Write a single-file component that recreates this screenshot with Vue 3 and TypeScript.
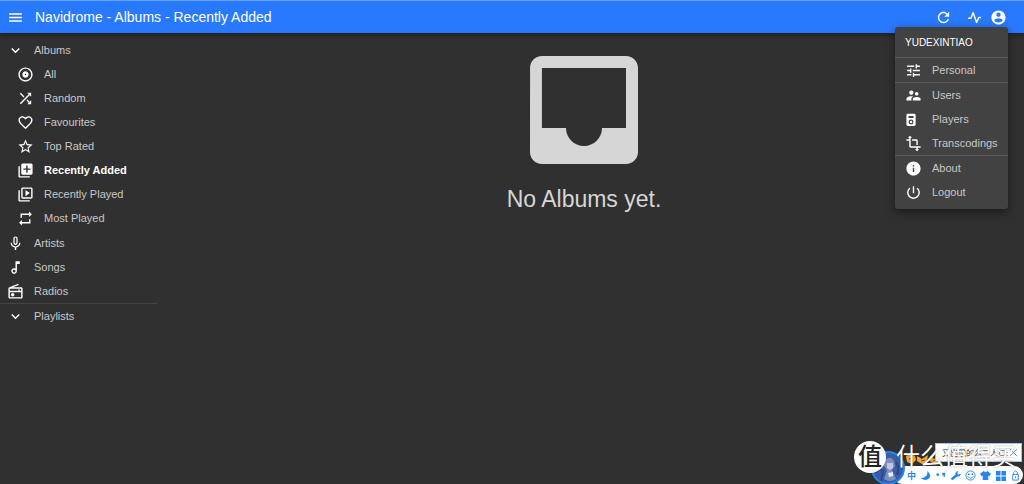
<script setup lang="ts">
import { ref } from 'vue'

interface Item {
  label: string
  icon: string
  active?: boolean
}

const paths: Record<string, string> = {
  menu: 'M3 18h18v-2H3v2zm0-5h18v-2H3v2zm0-7v2h18V6H3z',
  expand: 'M16.59 8.59L12 13.17 7.41 8.59 6 10l6 6 6-6z',
  album: 'M12 2C6.48 2 2 6.48 2 12s4.48 10 10 10 10-4.48 10-10S17.52 2 12 2zm0 18c-4.41 0-8-3.59-8-8s3.59-8 8-8 8 3.59 8 8-3.59 8-8 8zm0-12.5c-2.49 0-4.5 2.01-4.5 4.5s2.01 4.5 4.5 4.5 4.5-2.01 4.5-4.5-2.01-4.5-4.5-4.5zm0 5.5c-.55 0-1-.45-1-1s.45-1 1-1 1 .45 1 1-.45 1-1 1z',
  shuffle: 'M10.59 9.17L5.41 4 4 5.41l5.17 5.17 1.42-1.41zM14.5 4l2.04 2.04L4 18.59 5.41 20 17.96 7.46 20 9.5V4h-5.5zm.33 9.41l-1.41 1.41 3.13 3.13L14.5 20H20v-5.5l-2.04 2.04-3.13-3.13z',
  heart: 'M16.5 3c-1.74 0-3.41.81-4.5 2.09C10.91 3.81 9.24 3 7.5 3 4.42 3 2 5.42 2 8.5c0 3.78 3.4 6.86 8.55 11.54L12 21.35l1.45-1.32C18.6 15.36 22 12.28 22 8.5 22 5.42 19.58 3 16.5 3zm-4.4 15.55l-.1.1-.1-.1C7.14 14.24 4 11.39 4 8.5 4 6.5 5.5 5 7.5 5c1.54 0 3.04.99 3.57 2.36h1.87C13.46 5.99 14.96 5 16.5 5c2 0 3.5 1.5 3.5 3.5 0 2.89-3.14 5.74-7.9 10.05z',
  star: 'M22 9.24l-7.19-.62L12 2 9.19 8.63 2 9.24l5.46 4.73L5.82 21 12 17.27 18.18 21l-1.63-7.03L22 9.24zM12 15.4l-3.76 2.27 1-4.28-3.32-2.88 4.38-.38L12 6.1l1.71 4.04 4.38.38-3.32 2.88 1 4.28L12 15.4z',
  added: 'M4 6H2v14c0 1.1.9 2 2 2h14v-2H4V6zm16-4H8c-1.1 0-2 .9-2 2v12c0 1.1.9 2 2 2h12c1.1 0 2-.9 2-2V4c0-1.1-.9-2-2-2zm-1 9h-4v4h-2v-4H9V9h4V5h2v4h4v2z',
  played: 'M4 6H2v14c0 1.1.9 2 2 2h14v-2H4V6zm16-4H8c-1.1 0-2 .9-2 2v12c0 1.1.9 2 2 2h12c1.1 0 2-.9 2-2V4c0-1.1-.9-2-2-2zm0 14H8V4h12v12zM12 5.5v9l6-4.5z',
  repeat: 'M7 7h10v3l4-4-4-4v3H5v6h2V7zm10 10H7v-3l-4 4 4 4v-3h12v-6h-2v4z',
  mic: 'M12 14c1.66 0 2.99-1.34 2.99-3L15 5c0-1.66-1.34-3-3-3S9 3.34 9 5v6c0 1.66 1.34 3 3 3zm-1.2-9.1c0-.66.54-1.2 1.2-1.2.66 0 1.2.54 1.2 1.2l-.01 6.2c0 .66-.53 1.2-1.19 1.2-.66 0-1.2-.54-1.2-1.2V4.9zm6.5 6.1c0 3-2.54 5.1-5.3 5.1S6.7 14 6.7 11H5c0 3.41 2.72 6.23 6 6.72V21h2v-3.28c3.28-.48 6-3.3 6-6.72h-1.7z',
  note: 'M12 3v10.55c-.59-.34-1.27-.55-2-.55-2.21 0-4 1.79-4 4s1.79 4 4 4 4-1.79 4-4V7h4V3h-6zm-2 16c-1.1 0-2-.9-2-2s.9-2 2-2 2 .9 2 2-.9 2-2 2z',
  radio: 'M3.24 6.15C2.51 6.43 2 7.17 2 8v12c0 1.1.89 2 2 2h16c1.11 0 2-.9 2-2V8c0-1.11-.89-2-2-2H8.3l8.26-3.34L15.88 1 3.24 6.15zM20 8v3h-2V9h-2v2H4V8h16zm0 12H4v-7h16v7zM8 14a2.5 2.5 0 1 0 0 5 2.5 2.5 0 1 0 0-5z',
  refresh: 'M17.65 6.35C16.2 4.9 14.21 4 12 4c-4.42 0-7.99 3.58-7.99 8s3.57 8 7.99 8c3.73 0 6.84-2.55 7.73-6h-2.08c-.82 2.33-3.04 4-5.65 4-3.31 0-6-2.69-6-6s2.69-6 6-6c1.66 0 3.14.69 4.22 1.78L13 11h7V4l-2.35 2.35z',
  account: 'M12 2C6.48 2 2 6.48 2 12s4.48 10 10 10 10-4.48 10-10S17.52 2 12 2zm0 3c1.66 0 3 1.34 3 3s-1.34 3-3 3-3-1.34-3-3 1.34-3 3-3zm0 14.2c-2.5 0-4.71-1.28-6-3.22.03-1.99 4-3.08 6-3.08 1.99 0 5.97 1.09 6 3.08-1.29 1.94-3.5 3.22-6 3.22z',
  tune: 'M3 17v2h6v-2H3zM3 5v2h10V5H3zm10 16v-2h8v-2h-8v-2h-2v6h2zM7 9v2H3v2h4v2h2V9H7zm14 4v-2H11v2h10zm-6-4h2V7h4V5h-4V3h-2v6z',
  users: 'M16.5 12c1.38 0 2.49-1.12 2.49-2.5S17.88 7 16.5 7 14 8.12 14 9.5s1.12 2.5 2.5 2.5zM9 11c1.66 0 2.99-1.34 2.99-3S10.66 5 9 5 6 6.34 6 8s1.34 3 3 3zm7.5 3c-1.83 0-5.5.92-5.5 2.75V19h11v-2.25c0-1.83-3.67-2.75-5.5-2.75zM9 13c-2.33 0-7 1.17-7 3.5V19h7v-2.25c0-.85.33-2.34 2.37-3.47C10.5 13.1 9.66 13 9 13z',
  player: 'M4 4h9q2 0 2 2v13q0 2-2 2H4q-2 0-2-2V6q0-2 2-2zm1 3v3h7V7zm3.500 5a3.500 3.500 0 1 0 0 7 3.500 3.500 0 1 0 0-7zm0 1.700a1.800 1.800 0 1 1 0 3.600 1.800 1.800 0 1 1 0-3.600z',
  transform: 'M22 18v-2H8V4h2L7 1 4 4h2v2H2v2h4v8c0 1.1.9 2 2 2h8v2h-2l3 3 3-3h-2v-2h4zM10 8h6v6h2V8c0-1.1-.9-2-2-2h-6v2z',
  info: 'M12 2C6.48 2 2 6.48 2 12s4.48 10 10 10 10-4.48 10-10S17.52 2 12 2zm1 15h-2v-6h2v6zm0-8h-2V7h2v2z',
  power: 'M13 3h-2v10h2V3zm4.83 2.17l-1.42 1.42C17.99 7.86 19 9.81 19 12c0 3.87-3.13 7-7 7s-7-3.13-7-7c0-2.19 1.01-4.14 2.58-5.42L6.17 5.17C4.23 6.82 3 9.26 3 12c0 4.97 4.03 9 9 9s9-4.03 9-9c0-2.74-1.23-5.18-3.17-6.83z',
  inbox: 'M19 3H4.99c-1.11 0-1.98.89-1.98 2L3 19c0 1.1.88 2 1.99 2H19c1.1 0 2-.9 2-2V5c0-1.1-.9-2-2-2zm0 12h-4c0 1.66-1.35 3-3 3s-3-1.34-3-3H4.99V5H19v10z',
}

const albumItems: Item[] = [
  { label: 'All', icon: 'album' },
  { label: 'Random', icon: 'shuffle' },
  { label: 'Favourites', icon: 'heart' },
  { label: 'Top Rated', icon: 'star' },
  { label: 'Recently Added', icon: 'added', active: true },
  { label: 'Recently Played', icon: 'played' },
  { label: 'Most Played', icon: 'repeat' },
]
const libraryItems: Item[] = [
  { label: 'Artists', icon: 'mic' },
  { label: 'Songs', icon: 'note' },
  { label: 'Radios', icon: 'radio' },
]
const menuGroups: Item[][] = [
  [{ label: 'Personal', icon: 'tune' }],
  [
    { label: 'Users', icon: 'users' },
    { label: 'Players', icon: 'player' },
    { label: 'Transcodings', icon: 'transform' },
  ],
  [
    { label: 'About', icon: 'info' },
    { label: 'Logout', icon: 'power' },
  ],
]

const albumsOpen = ref(true)
const menuOpen = ref(true)
</script>

<template>
  <div class="page">
    <header class="bar">
      <button class="icon-btn" aria-label="Menu">
        <svg class="icon" viewBox="0 0 24 24"><path :d="paths.menu" /></svg>
      </button>
      <h1 class="title">Navidrome - Albums - Recently Added</h1>
      <button class="icon-btn" aria-label="Refresh">
        <svg class="icon" viewBox="0 0 24 24"><path :d="paths.refresh" /></svg>
      </button>
      <button class="icon-btn activity" aria-label="Activity">
        <svg class="icon" viewBox="0 0 24 24"><path class="pulse" d="M3 13h4l3-8 5 14 3-7h3" /></svg>
      </button>
      <button class="icon-btn" aria-label="Profile" @click="menuOpen = !menuOpen">
        <svg class="icon" viewBox="0 0 24 24"><path :d="paths.account" /></svg>
      </button>
      <div v-if="menuOpen" class="user-menu">
        <div class="user-name">YUDEXINTIAO</div>
        <div v-for="(group, g) in menuGroups" :key="g" class="menu-group">
          <button v-for="item in group" :key="item.label" class="menu-item">
            <svg class="icon" viewBox="0 0 24 24"><path :d="paths[item.icon]" fill-rule="evenodd" /></svg>
            {{ item.label }}
          </button>
        </div>
      </div>
    </header>

    <div class="body">
      <nav class="sidebar">
        <button class="row" @click="albumsOpen = !albumsOpen">
          <svg class="icon" viewBox="0 0 24 24"><path :d="paths.expand" /></svg>Albums
        </button>
        <div v-if="albumsOpen" class="sub">
          <a v-for="item in albumItems" :key="item.label" href="#" class="row" :class="{ active: item.active }">
            <svg class="icon" viewBox="0 0 24 24"><path :d="paths[item.icon]" /></svg>{{ item.label }}
          </a>
        </div>
        <a v-for="item in libraryItems" :key="item.label" href="#" class="row">
          <svg class="icon" viewBox="0 0 24 24"><path :d="paths[item.icon]" fill-rule="evenodd" /></svg>{{ item.label }}
        </a>
        <hr class="divider" />
        <button class="row">
          <svg class="icon" viewBox="0 0 24 24"><path :d="paths.expand" /></svg>Playlists
        </button>
      </nav>
      <main class="empty">
        <svg class="inbox" viewBox="0 0 24 24"><path :d="paths.inbox" /></svg>
        <p class="message">No Albums yet.</p>
      </main>
    </div>

    <div class="overlay">
      <svg class="faces" viewBox="0 0 34 10">
        <g fill="#f8a92d">
          <path d="M0 2q5-4 9 0l1 4-4 4-5-2zM11 2l5 3 6-4-1 6-5 3-5-3zM24 2l4 3 6-4-1 6-5 3-4-3z" />
        </g>
        <path d="M3 5l3-1M15 7l4-1M27 7l4-1" stroke="#8d3f18" />
      </svg>
      <div class="tip"><span>又出现的么三人口:</span><button class="close" aria-label="Close">
        <svg viewBox="0 0 10 10"><path d="M1 1l8 8M9 1L1 9" /></svg>
      </button></div>
      <div class="ime">
        <button class="tool">中</button>
        <button class="tool" aria-label="Moon"><svg viewBox="0 0 12 12"><path d="M8 1q1 7-7 8 5 4 9 0 3-4-2-8z" /></svg></button>
        <button class="tool" aria-label="Punctuation"><svg viewBox="0 0 12 12"><circle cx="3" cy="5" r="1.5" /><path d="M8 3h3v3q0 2-2 2l1-2H8z" /></svg></button>
        <button class="tool" aria-label="Tools"><svg viewBox="0 0 12 12"><path d="M1 9l5-4q-1-3 3-4L8 4l1 1 3-1q-1 4-4 3l-5 4q-2 0-2-2z" /></svg></button>
        <button class="tool" aria-label="Emoji"><svg viewBox="0 0 12 12"><g class="line"><circle cx="6" cy="6" r="5" /><path d="M3 7q3 4 6 0" /></g><circle cx="4" cy="4.5" r="1" /><circle cx="8" cy="4.5" r="1" /></svg></button>
        <button class="tool" aria-label="Skin"><svg viewBox="0 0 12 12"><path d="M4 1q2 2 4 0l4 3-2 3-1-1v5H3V6L2 7 0 4z" /></svg></button>
        <button class="tool" aria-label="Apps"><svg viewBox="0 0 12 12"><path d="M1 1h5v5H1zM7 1h5v5H7zM1 7h5v5H1zM7 7h5v5H7z" /></svg></button>
        <button class="tool" aria-label="Lock"><svg viewBox="0 0 12 12"><g class="line"><path d="M3 5h6v6H3zM4 5V3q2-4 4 0v2M6 7v2" /></g></svg></button>
      </div>
      <svg class="mascot" viewBox="0 0 34 34">
        <circle cx="17" cy="17" r="16" fill="#3d5ca5" stroke="#2385ee" stroke-width="2" />
        <path d="M14 9q6-5 9 1l1 5-3 4 4 9q-6 4-12 0l3-9-3-4z" fill="#7d90bd" />
        <path d="M16 12h6v5l-3 2-3-2z" fill="#c3c6dc" />
        <path d="M5 22q4-7 7-1l-2 9M25 11q4 6 1 13" fill="none" stroke="#2d488f" stroke-width="2" />
        <path d="M17 22l5-1v4l-4 1z" fill="#eceaf3" />
      </svg>
      <div class="seal">值</div>
      <div class="brand">什么值得买</div>
    </div>
  </div>
</template>

<style>
html, body { margin: 0; background: #303030; }
</style>

<style scoped>
.page {
  position: relative;
  min-height: 100vh;
  overflow: hidden;
  background: #303030;
  color: #c8c8c8;
  font-family: "Liberation Sans", Arial, "Noto Sans CJK SC", sans-serif;
  font-size: 11px;
}
button { padding: 0; border: 0; background: none; color: inherit; font: inherit; cursor: pointer; }
a { color: inherit; text-decoration: none; }
.icon { display: block; flex: none; width: 17px; height: 17px; fill: #fff; }
.bar {
  position: relative;
  z-index: 2;
  display: flex;
  align-items: center;
  box-sizing: border-box;
  height: 33px;
  padding: 0 17px 0 7px;
  border-top: 1px solid #6ba3fb;
  background: #2979ff;
  box-shadow: 0 1px 5px rgba(0, 0, 0, 0.5);
}
.title { flex: 1; margin: 0 0 0 11px; color: #fff; font-size: 14px; font-weight: 400; line-height: 20px; }
.activity { margin: 0 7px 0 14px; }
.pulse { fill: none; stroke: #fff; stroke-width: 2; stroke-linejoin: round; }
.user-menu {
  position: absolute;
  top: 26px;
  right: 16px;
  width: 113px;
  padding-bottom: 5px;
  border-radius: 3px;
  background: #424242;
  box-shadow: 0 3px 8px rgba(0, 0, 0, 0.5);
}
.user-name { padding: 2px 10px 0; color: #fff; font-size: 10px; line-height: 28px; }
.menu-group { border-top: 1px solid #5a5a5a; }
.menu-item { display: flex; align-items: center; gap: 10px; width: 100%; height: 24px; padding: 0 10px; }
.body { display: flex; }
.sidebar { width: 157px; padding-top: 5px; }
.row { display: flex; align-items: center; gap: 10px; width: 100%; height: 24px; padding: 0 0 0 7px; box-sizing: border-box; }
.sub { padding-bottom: 1px; }
.sub .row { padding-left: 17px; }
.row.active { color: #fff; font-weight: 700; }
.divider { margin: 0; border: 0; border-top: 1px solid #444; }
.empty { display: flex; flex: 1; flex-direction: column; align-items: center; padding: 5px 13px 0 0; }
.inbox { width: 144px; height: 144px; fill: #d6d6d6; }
.message { margin: 3px 0 0; color: #d6d6d6; font-size: 23px; line-height: 28px; }
.overlay { position: absolute; right: 0; bottom: 0; width: 170px; height: 44px; }
.mascot { position: absolute; left: 17px; top: 11px; width: 34px; height: 34px; }
.faces { position: absolute; left: 52px; top: 14px; width: 34px; height: 10px; }
.tip {
  position: absolute;
  right: 2px;
  top: 3px;
  display: flex;
  align-items: center;
  justify-content: space-between;
  box-sizing: border-box;
  width: 87px;
  height: 19px;
  padding: 0 3px 0 6px;
  border: 1px solid #a5c4ea;
  background: #fff;
  color: #333;
  font-size: 8px;
  white-space: nowrap;
}
.close svg { display: block; width: 9px; height: 9px; fill: none; stroke: #668bb5; }
.ime {
  position: absolute;
  right: 1px;
  bottom: 0;
  display: flex;
  align-items: center;
  justify-content: space-between;
  box-sizing: border-box;
  width: 130px;
  height: 18px;
  padding: 0 2px 0 14px;
  border-radius: 9px;
  background: #fff;
  color: #2585f2;
  font-size: 9px;
  font-weight: 700;
}
.tool svg { display: block; width: 11px; height: 11px; fill: #2585f2; }
.line { fill: none; stroke: #2585f2; }
.seal {
  position: absolute;
  left: 0;
  top: 1px;
  width: 32px;
  height: 32px;
  border-radius: 50%;
  background: #fff;
  color: #222;
  font-size: 24px;
  font-weight: 500;
  line-height: 31px;
  text-align: center;
}
.brand {
  position: absolute;
  left: 42px;
  top: 1px;
  color: #fff;
  font-size: 24px;
  line-height: 32px;
  white-space: nowrap;
  text-shadow: 0 0 2px rgba(0, 0, 0, 0.4);
}
</style>
